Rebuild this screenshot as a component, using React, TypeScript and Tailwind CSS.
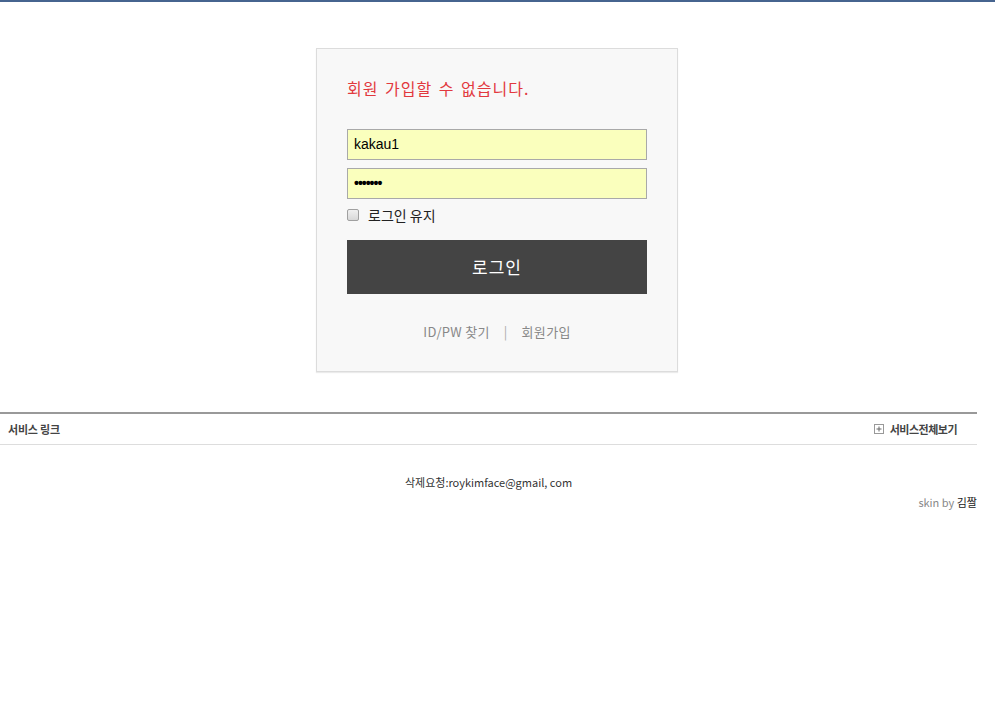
import React from "react";

const kr = { fontFamily: '"Noto Sans CJK KR", "Noto Sans", sans-serif' };
const ar = { fontFamily: '"Liberation Sans", "Noto Sans CJK KR", sans-serif' };

export default function App() {
  return (
    <div className="min-h-[716px] bg-white" style={kr}>
      <div className="h-[2px] bg-[#46648f]" />
      <div className="flex justify-center pt-[46px] pr-[1px]">
        <div className="w-[362px] border border-[#dcdcdc] bg-[#f8f8f8] px-[30px] pt-[27px] pb-[30px] shadow-[0_1px_1px_rgba(0,0,0,0.08)]">
          <div className="text-[16px] leading-[24px] tracking-[1px] text-[#e2393e] [word-spacing:2px]">회원 가입할 수 없습니다.</div>
          <div className="mt-[29px] flex flex-col gap-[8px]">
            <div className="flex h-[31px] w-[300px] items-center border border-[#a9a9a9] bg-[#faffbd] px-[6px] text-[14px] text-black" style={ar}>
              kakau1
            </div>
            <div className="flex h-[31px] w-[300px] items-center border border-[#a9a9a9] bg-[#faffbd] px-[6px] text-[14px] font-bold tracking-[-1px] text-black" style={ar}>
              •••••••
            </div>
          </div>
          <label className="mt-[6px] flex h-[20px] items-center">
            <span className="h-[12px] w-[12px] rounded-[2px] border border-[#a0a0a0] bg-gradient-to-b from-[#f0f0f0] to-[#d8d8d8]" />
            <span className="ml-[9px] text-[14px] text-[#222]">로그인 유지</span>
          </label>
          <div className="mt-[15px] flex h-[54px] w-[300px] items-center justify-center bg-[#444444] text-[17px] tracking-[1px] text-white">
            로그인
          </div>
          <div className="mt-[29px] flex items-center justify-center text-[13px] leading-[18px] tracking-[0.3px] text-[#888]">
            <span>ID/PW 찾기</span>
            <span className="mx-[14px] text-[#aaa]">|</span>
            <span>회원가입</span>
          </div>
        </div>
      </div>
      <div className="mt-[40px] w-[977px]">
        <div className="flex h-[33px] items-center justify-between border-t-2 border-b border-t-[#999] border-b-[#ddd] px-[8px]">
          <span className="text-[11px] font-bold tracking-[-0.2px] text-[#444]">서비스 링크</span>
          <span className="mr-[12px] flex items-center text-[11px] font-bold tracking-[-0.5px] text-[#444]">
            <svg width="10" height="10" viewBox="0 0 10 10" className="mr-[6px]">
              <rect x="0.5" y="0.5" width="9" height="9" fill="white" stroke="#999" />
              <path d="M2.5 5h5M5 2.5v5" stroke="#666" />
            </svg>
            서비스전체보기
          </span>
        </div>
        <div className="mt-[29px] text-center text-[11px] text-[#333]">삭제요청:roykimface@gmail, com</div>
        <div className="mt-[3px] text-right text-[11px]">
          <span className="text-[#888]">skin by </span>
          <span className="text-[#222]">김짤</span>
        </div>
      </div>
    </div>
  );
}
